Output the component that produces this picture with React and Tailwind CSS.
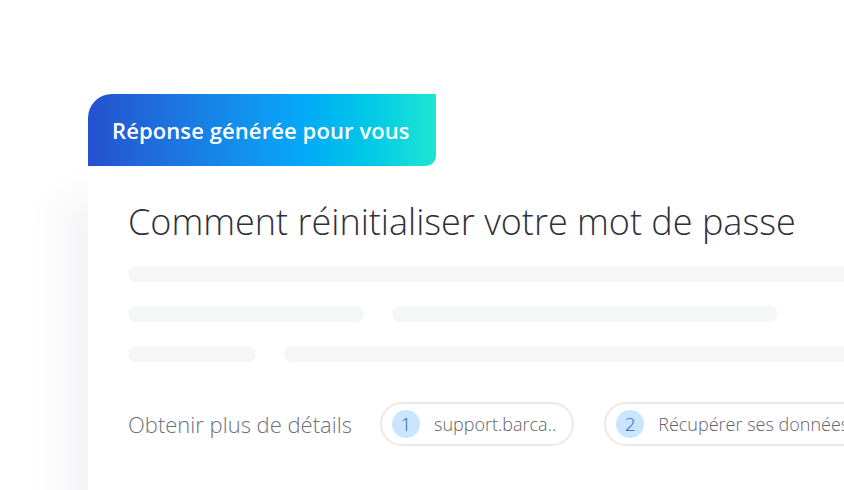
import React from 'react';

const font = { fontFamily: '"Open Sans", Lato, sans-serif' };

const SourcePill = ({ index, label }) => (
    <div className="flex items-center shrink-0 h-[44px] pl-[10px] pr-[16px] rounded-full border-2 border-[#e9eaeb] bg-white">
        <span className="flex items-center justify-center w-[28px] h-[28px] rounded-full bg-[#cbe5ff] text-[#2a62c9] text-[19px] font-light">
            {index}
        </span>
        <span className="ml-[14px] text-[18px] font-light text-[#5f626c] whitespace-nowrap">{label}</span>
    </div>
);

const Bar = ({ className }) => <div className={`h-4 rounded-full bg-[#f5f6f6] ${className}`} />;

const App = () => {
    return (
        <div className="w-[844px] h-[490px] bg-white overflow-hidden pt-[94px] pl-[88px]" style={font}>
            <div className="flex">
                <div className="w-[348px] h-[72px] flex items-center pl-[24px] rounded-tl-[24px] rounded-br-[10px] bg-gradient-to-r from-[#2450cf] via-[#06a6f8] via-60% to-[#1de6d2]">
                    <span className="text-white text-[22px] font-semibold tracking-[0.1px]">Réponse générée pour vous</span>
                </div>
            </div>
            <div className="w-[900px] h-[400px] bg-white pl-[40px] pt-[34px] shadow-[-30px_30px_36px_rgba(20,30,60,0.045)]">
                <h1 className="text-[36px] leading-[44px] font-light text-[#2e313b] whitespace-nowrap">
                    Comment réinitialiser votre mot de passe
                </h1>
                <div className="mt-[22px] flex flex-col gap-[24px]">
                    <Bar className="w-[760px]" />
                    <div className="flex gap-[28px]">
                        <Bar className="w-[236px]" />
                        <Bar className="w-[386px]" />
                    </div>
                    <div className="flex gap-[28px]">
                        <Bar className="w-[128px]" />
                        <Bar className="w-[600px]" />
                    </div>
                </div>
                <div className="mt-[40px] flex items-center">
                    <span className="w-[252px] shrink-0 text-[22px] font-light text-[#6d717b] whitespace-nowrap">Obtenir plus de détails</span>
                    <div className="flex gap-[30px]">
                        <SourcePill index="1" label="support.barca.." />
                        <SourcePill index="2" label="Récupérer ses données" />
                    </div>
                </div>
            </div>
        </div>
    );
};

export default App;
